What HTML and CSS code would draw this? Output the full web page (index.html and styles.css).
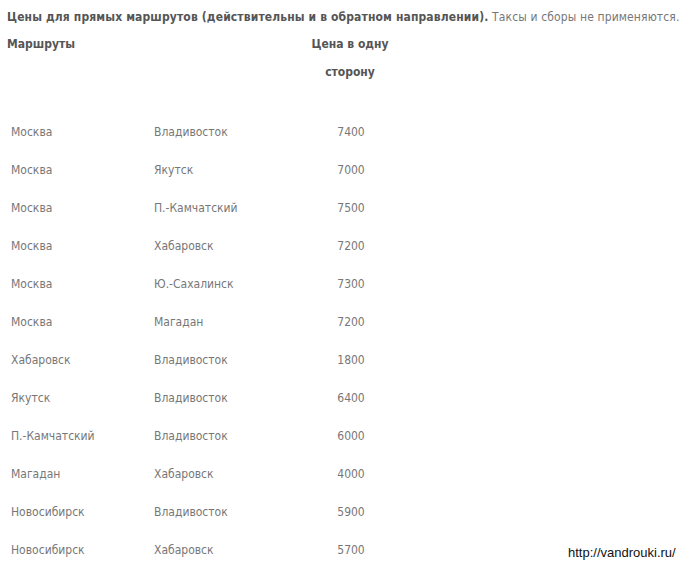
FILE: index.html
```html
<!DOCTYPE html>
<html lang="ru">
<head>
<meta charset="utf-8">
<link rel="stylesheet" href="styles.css">
</head>
<body>
<div class="page">
  <p class="intro"><b>Цены для прямых маршрутов (действительны и в обратном направлении).</b> Таксы и сборы не применяются.</p>
  <div class="head">
    <div class="h-routes">Маршруты</div>
    <div class="h-price">Цена в одну<br>сторону</div>
  </div>
  <div class="rows">
    <div class="row"><span>Москва</span><span>Владивосток</span><span class="price">7400</span></div>
    <div class="row"><span>Москва</span><span>Якутск</span><span class="price">7000</span></div>
    <div class="row"><span>Москва</span><span>П.-Камчатский</span><span class="price">7500</span></div>
    <div class="row"><span>Москва</span><span>Хабаровск</span><span class="price">7200</span></div>
    <div class="row"><span>Москва</span><span>Ю.-Сахалинск</span><span class="price">7300</span></div>
    <div class="row"><span>Москва</span><span>Магадан</span><span class="price">7200</span></div>
    <div class="row"><span>Хабаровск</span><span>Владивосток</span><span class="price">1800</span></div>
    <div class="row"><span>Якутск</span><span>Владивосток</span><span class="price">6400</span></div>
    <div class="row"><span>П.-Камчатский</span><span>Владивосток</span><span class="price">6000</span></div>
    <div class="row"><span>Магадан</span><span>Хабаровск</span><span class="price">4000</span></div>
    <div class="row"><span>Новосибирск</span><span>Владивосток</span><span class="price">5900</span></div>
    <div class="row"><span>Новосибирск</span><span>Хабаровск</span><span class="price">5700</span></div>
  </div>
  <div class="watermark">http://vandrouki.ru/</div>
</div>
</body>
</html>
```

FILE: styles.css
```css
html, body {
  margin: 0;
  padding: 0;
  background: #ffffff;
}
.page {
  position: relative;
  width: 682px;
  height: 567px;
  overflow: hidden;
  font-family: "DejaVu Sans Condensed", "DejaVu Sans", sans-serif;
  font-size: 12px;
  color: #777777;
}
.intro {
  margin: 0;
  padding: 7px 0 0 7px;
  line-height: 20px;
  white-space: nowrap;
  letter-spacing: 0.13px;
}
.intro b {
  color: #555555;
}
.head {
  display: grid;
  grid-template-columns: 273px 140px;
  margin-top: 3px;
  padding-left: 7px;
  line-height: 28px;
  font-weight: bold;
  color: #555555;
}
.h-price {
  text-align: center;
}
.rows {
  margin-top: 27px;
  display: flex;
  flex-direction: column;
}
.row {
  display: grid;
  grid-template-columns: 143px 139px 116px;
  padding-left: 11px;
  height: 38px;
  align-items: center;
}
.price {
  text-align: center;
}
.watermark {
  position: absolute;
  left: 568px;
  top: 545px;
  font-family: "Liberation Sans", Arial, sans-serif;
  font-size: 13px;
  color: #111111;
}
```
